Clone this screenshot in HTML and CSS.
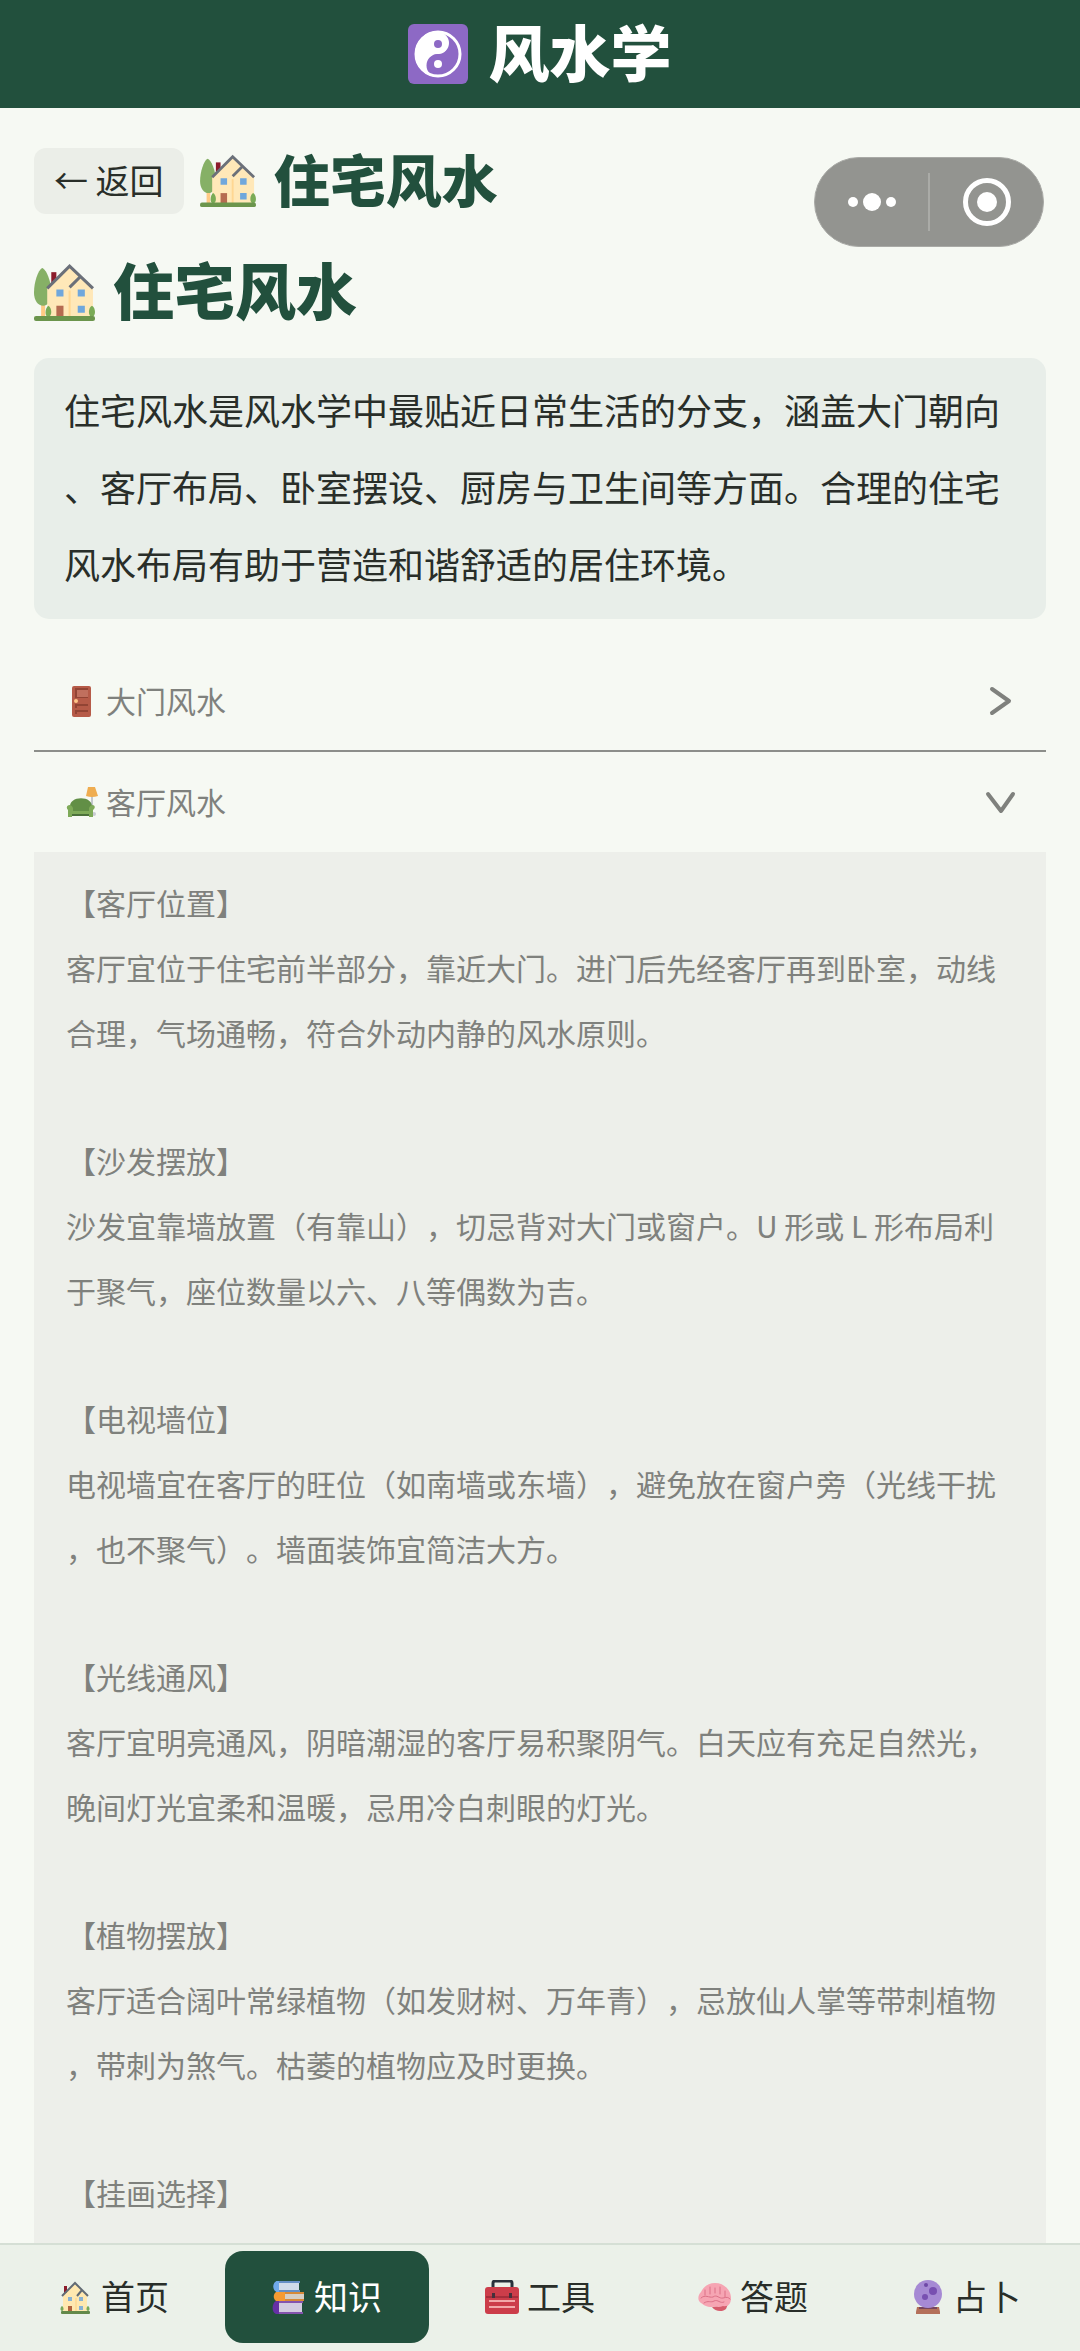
FILE: index.html
```html
<!DOCTYPE html>
<html lang="zh-CN">
<head>
<meta charset="utf-8">
<meta name="viewport" content="width=device-width, initial-scale=1">
<title>风水学</title>
<link rel="stylesheet" href="styles.css">
</head>
<body>
<svg class="sprite" aria-hidden="true">
  <symbol id="house" viewBox="0 0 60 58">
    <path d="M7 40h4v14H7z" fill="#ffca85"/>
    <path d="M8 5C4 7 0 19 0 29c0 8 4 13 9 13s8-5 8-13C17 18 12 6 8 5z" fill="#86b066"/>
    <path d="M17 9h5v12h-5z" fill="#8c1c2b"/>
    <path d="M13 25 35 4 58 25v28H13z" fill="#ffe8b8"/>
    <path d="M35 27v26" stroke="#ffd792" stroke-width="2"/>
    <path d="m13 25 22-22 23 22M35 24l11-11" fill="none" stroke="#6b7079" stroke-width="3"/>
    <path d="M22 26h7v7h-7zM43 26h7v7h-7zM43 42h7v7h-7z" fill="#70a7dc"/>
    <path d="M22 42h7v11h-7z" fill="#b56b50"/>
    <path d="M14 42c-3 2-4 11 0 11s4-9 0-11zM57 42c-4 2-4 11 0 11s4-9 0-11z" fill="#7aab56"/>
    <rect y="52" width="60" height="5" rx="2" fill="#6b954c"/>
  </symbol>
  <symbol id="house-small" viewBox="0 0 34 34">
    <path d="M5 6h3v7H5z" fill="#8c1c2b"/>
    <path d="M4 16 16 4l12 12v16H4z" fill="#ffe8b0"/>
    <path d="M17 18v13" stroke="#ffd182"/>
    <path d="M3 16 16 3l13 13M18 16l5-6" fill="none" stroke="#626b74" stroke-width="2"/>
    <path d="M9 17h4v4H9zM20 17h4v4h-4zM20 26h4v4h-4z" fill="#88b2d4"/>
    <path d="M9 26h4v6H9z" fill="#b2643f"/>
    <path d="M3 26c-2 1-2 5 0 5s2-4 0-5zM29 26c-2 1-2 5 0 5s2-4 0-5z" fill="#78a95a"/>
    <rect x="2" y="31" width="29" height="3" rx="1" fill="#63894a"/>
  </symbol>
</svg>

<header class="topbar">
  <svg class="topbar-icon" viewBox="0 0 60 60" aria-hidden="true">
    <rect width="60" height="60" rx="6" fill="#8d69c5"/>
    <circle cx="30" cy="30" r="22" fill="none" stroke="#fff" stroke-width="3"/>
    <path d="M30 7a23 23 0 0 0 0 46A11 11 0 0 1 30 30 11 11 0 0 0 30 8z" fill="#fff"/>
    <circle cx="30" cy="20" r="10" fill="#fff"/>
    <circle cx="30" cy="20" r="4" fill="#8d69c5"/>
    <circle cx="30" cy="40" r="10" fill="#8d69c5"/>
    <circle cx="30" cy="40" r="4" fill="#fff"/>
  </svg>
  <span class="topbar-title">风水学</span>
</header>

<div class="capsule">
  <button class="capsule-button" type="button" aria-label="更多">
    <svg viewBox="0 0 50 50" width="50" height="50"><g fill="#fff"><circle cx="6" cy="25" r="5"/><circle cx="25" cy="25" r="9"/><circle cx="44" cy="25" r="5"/></g></svg>
  </button>
  <button class="capsule-button" type="button" aria-label="关闭">
    <svg viewBox="0 0 50 50" width="50" height="50"><circle cx="25" cy="25" r="21.5" fill="none" stroke="#fff" stroke-width="5"/><circle cx="25" cy="25" r="10" fill="#fff"/></svg>
  </button>
</div>

<main class="content">
  <div class="page-head">
    <button class="back" type="button">← 返回</button>
    <svg class="head-icon" aria-hidden="true"><use href="#house"/></svg>
    <h1 class="head-title">住宅风水</h1>
  </div>
  <h2 class="title"><svg class="title-icon" aria-hidden="true"><use href="#house"/></svg><span class="title-text">住宅风水</span></h2>
  <p class="intro">住宅风水是风水学中最贴近日常生活的分支，涵盖大门朝向、客厅布局、卧室摆设、厨房与卫生间等方面。合理的住宅风水布局有助于营造和谐舒适的居住环境。</p>

  <button class="row row-closed" type="button" aria-expanded="false">
    <svg class="row-icon" viewBox="0 0 32 32" aria-hidden="true">
      <rect x="6" y="1" width="19" height="31" rx="2" fill="#b65b48"/>
      <path d="M9 3h13v10H9z" fill="#924434"/><path d="M11 5h11v7H11z" fill="#c0705e"/>
      <path d="M9 19h13v4H9zM9 25h13v4H9z" fill="#924434"/><path d="M11 21h11v2H11zM11 27h11v2H11z" fill="#b65b48"/>
      <circle cx="10" cy="16" r="2" fill="#ffc68a"/>
    </svg>
    <span class="row-label">大门风水</span>
    <svg class="chevron" viewBox="0 0 32 32" aria-hidden="true"><path d="m8 4 17 12L8 28"/></svg>
  </button>
  <button class="row" type="button" aria-expanded="true" aria-controls="living-room">
    <svg class="row-icon" viewBox="0 0 32 32" aria-hidden="true">
      <path d="M26 9v18" stroke="#c3c7cd" stroke-width="2"/><circle cx="28" cy="28" r="2" fill="#c9ccd2"/>
      <path d="M22 1h7l3 9q-6 2-12 0z" fill="#efad50"/>
      <path d="M4 22C2 9 28 9 26 22v4H4z" fill="#628f46"/>
      <path d="M2 31v-7c-4-4 3-8 5-2v3h16v-3c2-6 9-2 4 2v7h-4v-2H6v2z" fill="#7eaa58"/>
      <path d="M6 28h17v2H6z" fill="#4b713a"/>
    </svg>
    <span class="row-label">客厅风水</span>
    <svg class="chevron" viewBox="0 0 32 32" aria-hidden="true"><path d="m4 8 13 17L29 8"/></svg>
  </button>

  <div class="panel" id="living-room">
    <section><h3>【客厅位置】</h3><p>客厅宜位于住宅前半部分，靠近大门。进门后先经客厅再到卧室，动线合理，气场通畅，符合外动内静的风水原则。</p></section>
    <section><h3>【沙发摆放】</h3><p>沙发宜靠墙放置（有靠山），切忌背对大门或窗户。U 形或 L 形布局利于聚气，座位数量以六、八等偶数为吉。</p></section>
    <section><h3>【电视墙位】</h3><p>电视墙宜在客厅的旺位（如南墙或东墙），避免放在窗户旁（光线干扰，也不聚气）。墙面装饰宜简洁大方。</p></section>
    <section><h3>【光线通风】</h3><p>客厅宜明亮通风，阴暗潮湿的客厅易积聚阴气。白天应有充足自然光，晚间灯光宜柔和温暖，忌用冷白刺眼的灯光。</p></section>
    <section><h3>【植物摆放】</h3><p>客厅适合阔叶常绿植物（如发财树、万年青），忌放仙人掌等带刺植物，带刺为煞气。枯萎的植物应及时更换。</p></section>
    <section><h3>【挂画选择】</h3></section>
  </div>
</main>

<nav class="tabs">
  <a class="tab" href="#home"><svg class="tab-icon" aria-hidden="true"><use href="#house-small"/></svg><span class="tab-label">首页</span></a>
  <a class="tab tab-active" href="#learn" aria-current="page">
    <svg class="tab-icon" viewBox="0 0 34 34" aria-hidden="true">
      <path d="M4 1h24v2H4zM4 10h24v2H4z" fill="#658fc6"/><path d="M5 3h22v7H5z" fill="#d0dbea"/><path d="M5 1C0 2 0 11 5 12h2V1z" fill="#70a9eb"/>
      <path d="M5 12h27v2H5zM5 19h27v2H5z" fill="#d78938"/><path d="M12 14h20v5H12z" fill="#d7cec4"/><path d="M4 12h9v9H4c-3-2-3-7 0-9z" fill="#f59a32"/>
      <path d="M4 21h27v2H4zM4 32h27v2H4z" fill="#8454ae"/><path d="M6 23h24v9H6z" fill="#d2cce1"/><path d="M4 21h3v13H4c-5-2-4-11 0-13z" fill="#6630a6"/>
    </svg><span class="tab-label">知识</span></a>
  <a class="tab" href="#tools">
    <svg class="tab-icon" viewBox="0 0 34 34" aria-hidden="true">
      <path d="M8 8V3q0-2 2-2h15q2 0 2 2v5" fill="none" stroke="#29313b" stroke-width="3"/>
      <rect y="7" width="34" height="27" rx="3" fill="#cc3d4a"/><path d="M1 16h32v2H1z" fill="#a62d3b"/>
      <path d="M7 13h3v5H7zM24 13h3v5h-3z" fill="#46303b"/><path d="M4 21h26M4 27h26" stroke="#f2a8a9" stroke-width="2"/>
    </svg><span class="tab-label">工具</span></a>
  <a class="tab" href="#quiz">
    <svg class="tab-icon" viewBox="0 0 34 34" aria-hidden="true">
      <path d="M14 27c3 5 11 5 14 2l2-5z" fill="#d65d6d"/>
      <path d="M3 12C6 6 11 3 17 3c9 0 16 7 16 15 0 6-3 9-8 8-4 2-8 0-11 1-6 0-8-2-11-4-4-3-3-8 0-11z" fill="#f6a5b3"/>
      <path d="M7 10v5m5-8v7m5-6v5m5-6v7m5-3v6M3 18c4-4 8 0 12-1 4-3 6 2 10 1s5-1 7 1M6 23c4-3 7 0 10-2 4-2 6 3 10 1" fill="none" stroke="#dc7187" stroke-linecap="round"/>
    </svg><span class="tab-label">答题</span></a>
  <a class="tab" href="#divine">
    <svg class="tab-icon" viewBox="0 0 34 34" aria-hidden="true">
      <path d="M6 27h22l1 5v2H5v-2z" fill="#b4705a"/><path d="M8 27h18v2H8z" fill="#78465c"/>
      <circle cx="17" cy="14" r="14" fill="#a68ad4"/><circle cx="15" cy="5" r="2" fill="#6e49a7"/><circle cx="22" cy="11" r="4" fill="#7850b1"/><circle cx="14" cy="17" r="3" fill="#7850b1"/>
    </svg><span class="tab-label">占卜</span></a>
</nav>
</body>
</html>
```
FILE: styles.css
```css
* { box-sizing: border-box; }

body {
  margin: 0;
  height: 100vh;
  display: flex;
  flex-direction: column;
  position: relative;
  background: #f6f9f3;
  color: #292e29;
  font-family: "Noto Sans CJK SC", sans-serif;
  font-size: 30px;
  text-spacing-trim: space-all;
}

h1, h2, h3, p { margin: 0; }

button {
  border: 0;
  padding: 0;
  background: none;
  color: inherit;
  font: inherit;
}

.sprite { position: absolute; width: 0; height: 0; }

.topbar {
  flex: none;
  height: 108px;
  display: flex;
  align-items: center;
  justify-content: center;
  gap: 20px;
  background: #22503d;
  color: #fff;
}

.topbar-icon { width: 60px; height: 60px; }

.topbar-title,
.head-title,
.title-text {
  padding-bottom: 6px;
  font-weight: 900;
}

.topbar-title {
  font-size: 61px;
  line-height: 72px;
}

/* Floating host-app menu */
.capsule {
  position: absolute;
  top: 157px;
  right: 36px;
  z-index: 2;
  width: 230px;
  height: 90px;
  display: flex;
  align-items: center;
  border: 1px solid #a9aaa6;
  border-radius: 45px;
  background: #939490;
}

.capsule-button {
  flex: 1;
  height: 58px;
  display: flex;
  align-items: center;
  justify-content: center;
}

.capsule-button + .capsule-button { border-left: 2px solid #aaaba7; }

.content {
  flex: 1;
  min-height: 0;
  overflow-y: auto;
  scrollbar-width: none;
  padding: 37px 34px 0;
}

.page-head {
  display: flex;
  align-items: center;
}

.back {
  height: 66px;
  padding: 0 20px 4px;
  border-radius: 12px;
  background: #ebeee8;
  font-size: 34px;
}

.head-icon {
  width: 56px;
  height: 54px;
  margin: 0 18px 0 16px;
}

.head-title {
  color: #22503d;
  font-size: 56px;
  line-height: 66px;
}

.title {
  display: flex;
  align-items: center;
  gap: 18px;
  margin: 36px 0 27px;
  color: #22503d;
  font-size: 61px;
  line-height: 72px;
}

.title-icon { width: 61px; height: 59px; }

.intro {
  margin-bottom: 33px;
  padding: 13px 30px 17px;
  border-radius: 15px;
  background: #e8eee9;
  font-size: 36px;
  line-height: 77px;
  line-break: anywhere;
}

.row {
  width: 100%;
  height: 100px;
  display: flex;
  align-items: center;
  gap: 8px;
  padding: 0 30px 0 32px;
  color: #7f817d;
  text-align: left;
}

.row-closed { border-bottom: 2px solid #8c8e8a; }

.row-icon { width: 32px; height: 32px; }

.row-label {
  flex: 1;
  padding-bottom: 3px;
}

.chevron {
  width: 32px;
  height: 32px;
  fill: none;
  stroke: #7f817d;
  stroke-width: 4;
  stroke-linecap: round;
  stroke-linejoin: round;
}

.panel {
  display: flex;
  flex-direction: column;
  gap: 63px;
  padding: 18px 32px 22px;
  background: #edefea;
  color: #7f817d;
  line-height: 65px;
  line-break: anywhere;
}

.panel h3 {
  font-size: 30px;
  font-weight: 400;
}

.tabs {
  flex: none;
  display: flex;
  gap: 9px;
  padding: 6px 12px 8px;
  border-top: 2px solid #d5dfd5;
  background: #ebf1e9;
}

.tab {
  flex: 1;
  height: 92px;
  display: flex;
  align-items: center;
  justify-content: center;
  gap: 8px;
  border-radius: 18px;
  color: #292e29;
  font-size: 34px;
  text-decoration: none;
}

.tab-active {
  background: #22503d;
  color: #fff;
}

.tab-icon { width: 34px; height: 34px; }

.tab-label { padding-bottom: 4px; }
```
